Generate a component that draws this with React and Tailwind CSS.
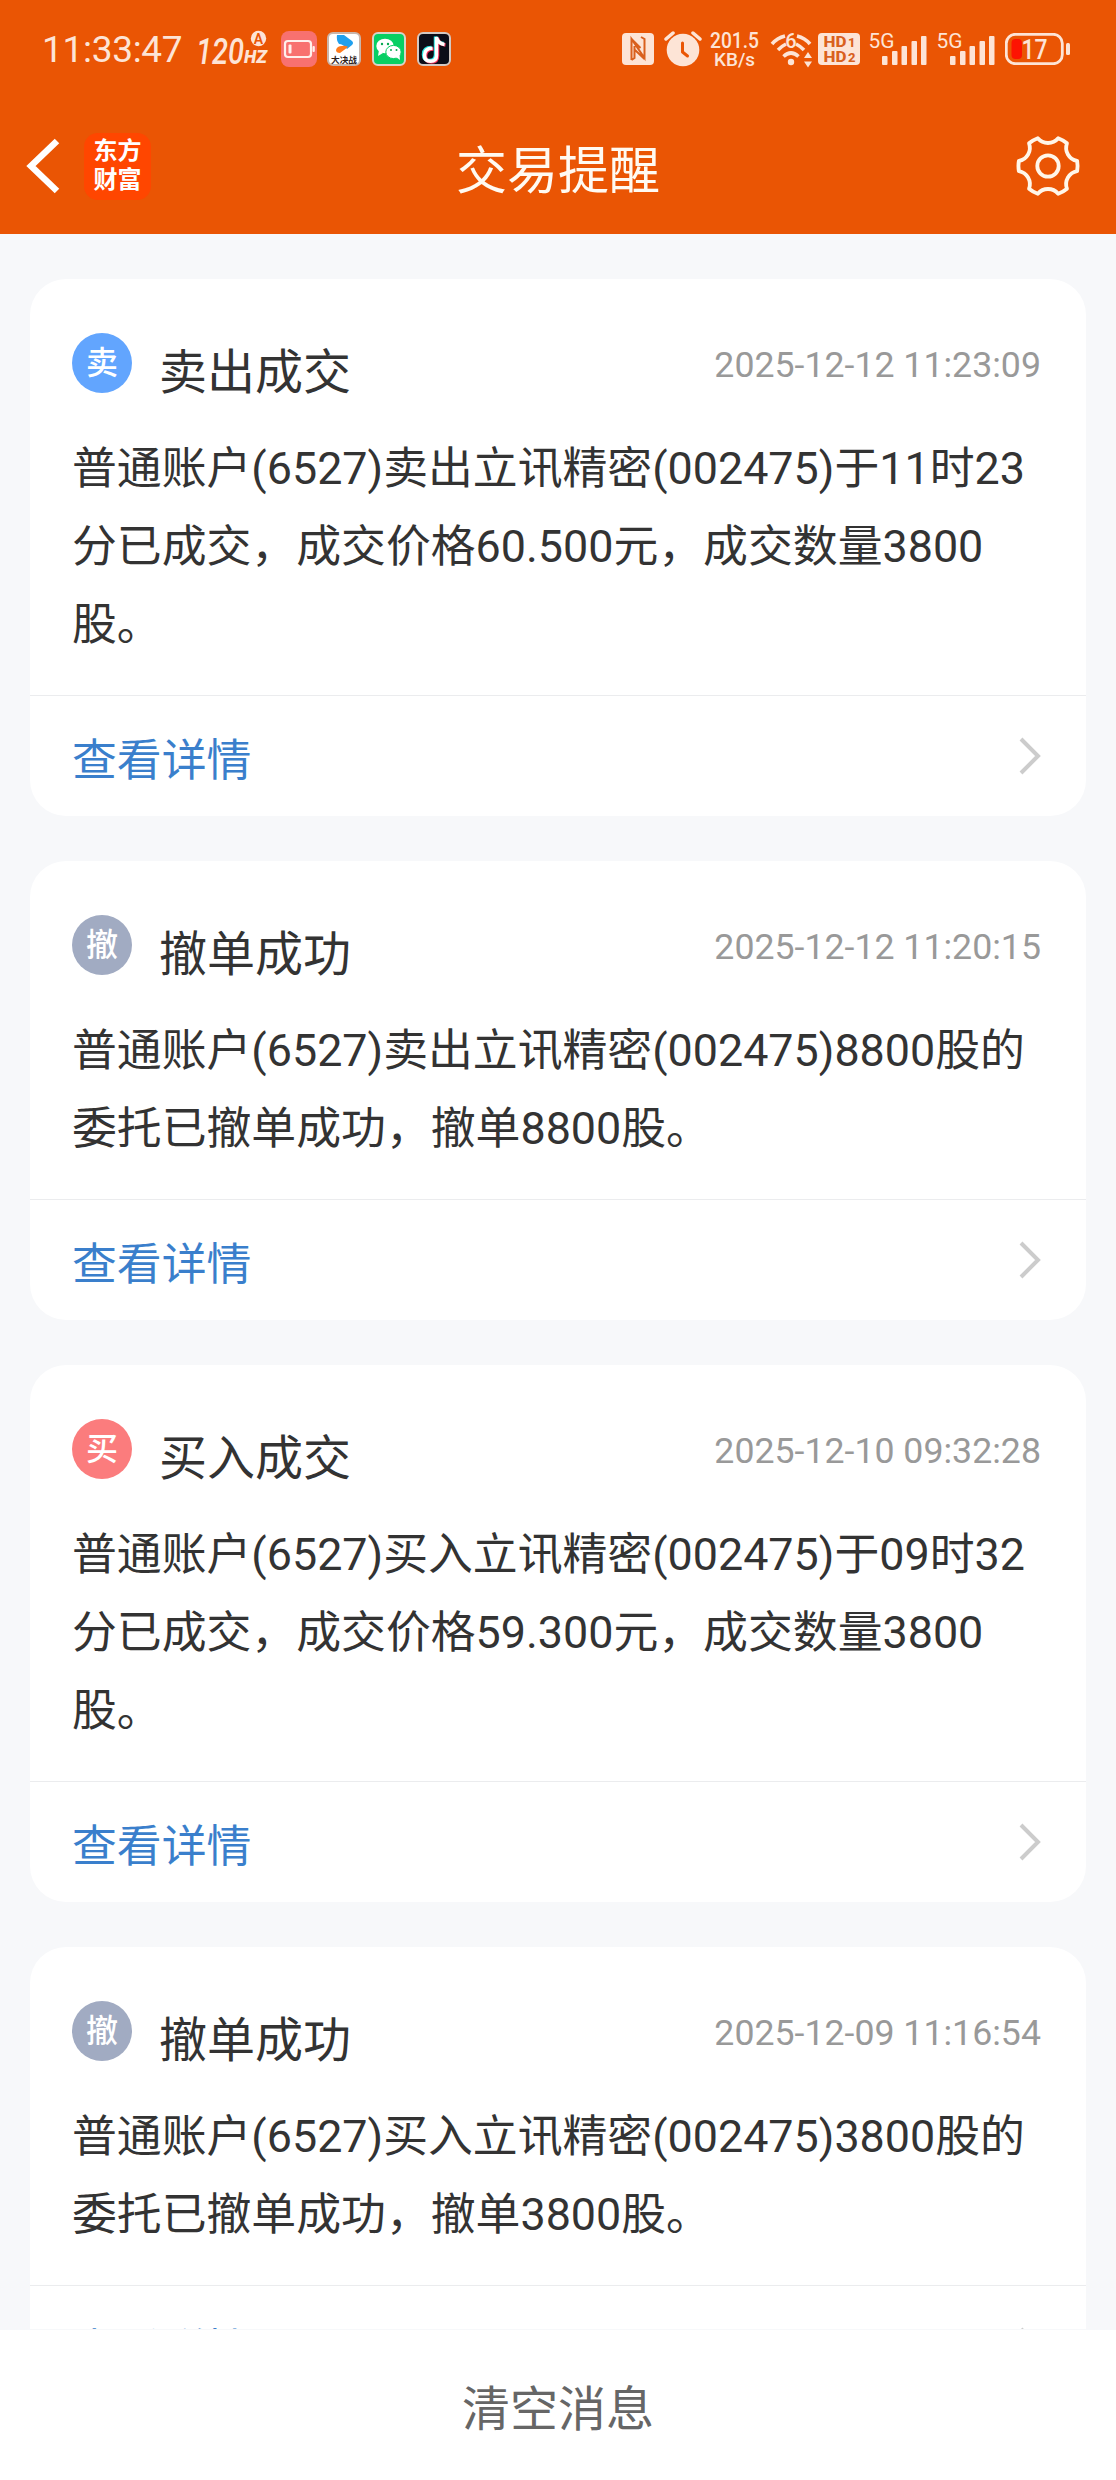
import React from 'react';
import clsx from 'clsx';

// --- DATA ---
const messages = [
  {
    type: 'sell',
    title: '卖出成交',
    time: '2025-12-12 11:23:09',
    text: '普通账户(6527)卖出立讯精密(002475)于11时23分已成交，成交价格60.500元，成交数量3800股。',
  },
  {
    type: 'cancel',
    title: '撤单成功',
    time: '2025-12-12 11:20:15',
    text: '普通账户(6527)卖出立讯精密(002475)8800股的委托已撤单成功，撤单8800股。',
  },
  {
    type: 'buy',
    title: '买入成交',
    time: '2025-12-10 09:32:28',
    text: '普通账户(6527)买入立讯精密(002475)于09时32分已成交，成交价格59.300元，成交数量3800股。',
  },
  {
    type: 'cancel',
    title: '撤单成功',
    time: '2025-12-09 11:16:54',
    text: '普通账户(6527)买入立讯精密(002475)3800股的委托已撤单成功，撤单3800股。',
  },
];

const badges = {
  sell: { label: '卖', color: 'bg-[#62a5fe]' },
  cancel: { label: '撤', color: 'bg-[#a1abc2]' },
  buy: { label: '买', color: 'bg-[#fb7c7d]' },
};

// --- STATUS BAR ICONS ---

const RefreshRate = () => (
  <svg className="ml-[15px] h-[36px] w-[74px] overflow-visible" viewBox="0 0 74 36" fill="#fde4d6">
    <text x="0" y="33" fontSize="37" fontWeight="500" fontStyle="italic" textLength="48" lengthAdjust="spacingAndGlyphs">120</text>
    <text x="48" y="32" fontSize="19" fontWeight="900" fontStyle="italic" textLength="23" lengthAdjust="spacingAndGlyphs">HZ</text>
    <circle cx="62.500" cy="7.500" r="7.700" />
    <text x="62.500" y="12.500" fontSize="14" fontWeight="600" textAnchor="middle" className="fill-[#ea5504]">A</text>
  </svg>
);

const LowBatteryApp = () => (
  <svg className="ml-[11px] size-[36px]" viewBox="0 0 36 36">
    <rect width="36" height="36" rx="8" fill="#f8716f" />
    <rect x="4" y="10" width="26" height="16" rx="3" fill="none" stroke="#fff0ec" strokeWidth="2.2" />
    <rect x="7.5" y="13.5" width="3" height="9" rx="1" fill="#fff0ec" />
    <rect x="31.5" y="15" width="2.3" height="6" rx="1" fill="#fff0ec" />
  </svg>
);

const VideoApp = () => (
  <svg className="ml-[10px] size-[34px]" viewBox="0 0 34 34">
    <rect x="1" y="1" width="32" height="32" rx="5" fill="#fff" stroke="#c9b5ab" strokeWidth="2" />
    <path d="M10 3h7l8 6q2 2 0 4l-5 4q-4-5-8-5-3-4-2-9z" fill="#20a0ee" />
    <path d="M21 15l-8 6q-4 0-4-3 1-4 6-4 3-1 6 1z" fill="#ff7a1c" />
    <text x="4" y="30.500" fontSize="8" fontWeight="700" fill="#2d211c" textLength="26" lengthAdjust="spacingAndGlyphs">大决战</text>
  </svg>
);

const WeChatApp = () => (
  <svg className="ml-[11px] size-[34px]" viewBox="0 0 34 34">
    <rect x="1" y="1" width="32" height="32" rx="5" fill="#07cf63" stroke="#d9d3c8" strokeWidth="2" />
    <ellipse cx="13" cy="14" rx="8.7" ry="7.3" fill="#fff" />
    <path d="M7 18l-1 6 5-3z" fill="#fff" />
    <ellipse cx="21.5" cy="20" rx="7.7" ry="6.6" fill="#fff" stroke="#07cf63" strokeWidth="1" />
    <path d="M24 25l4 3-.5-5z" fill="#fff" />
    <g fill="#07a850">
      <circle cx="10" cy="12" r="1.2" />
      <circle cx="16" cy="12" r="1.2" />
      <circle cx="19" cy="18" r="1" />
      <circle cx="24.5" cy="18" r="1" />
    </g>
  </svg>
);

const TikTokApp = () => (
  <svg className="ml-[11px] size-[34px]" viewBox="0 0 34 34">
    <rect x="1" y="1" width="32" height="32" rx="5" fill="#0c0d18" stroke="#d3c8c2" strokeWidth="2" />
    <g fill="none" strokeWidth="3.500">
      <path d="M14.500 15.500q-8 0-8 7 0 6 6 6t6-6V4.500q1 6 8 7" stroke="#25e5e0" />
      <path d="M16.500 17q-8 0-8 7 0 6 6 6t6-6V6q1 6 8 7" stroke="#f5345c" />
      <path d="M15.500 16.200q-8 0-8 7 0 6 6 6t6-6V5q1 6.500 8 7.500" stroke="#fff" />
    </g>
  </svg>
);

const Nfc = () => (
  <svg className="size-[32px]" viewBox="0 0 32 32">
    <rect width="32" height="32" rx="4" fill="#fde4d6" />
    <path d="M9.500 27V6l13 19V10M9.500 27l3-2V13M22.500 25V6l-3.500-2M9.500 6l9 9M13 17l9.500 9" fill="none" stroke="#d9601e" strokeWidth="2" />
  </svg>
);

const Alarm = () => (
  <svg className="ml-[10px] h-[36px] w-[38px]" viewBox="0 0 38 36">
    <circle cx="19" cy="19" r="16.300" fill="#fde4d6" />
    <path d="M2 8l7-6M36 8l-7-6" stroke="#fde4d6" strokeWidth="3.500" strokeLinecap="round" />
    <path d="M18.500 12v9l5 4" fill="none" stroke="#ea5504" strokeWidth="3" strokeLinecap="round" strokeLinejoin="round" />
  </svg>
);

const NetSpeed = () => (
  <svg className="ml-[7px] h-[36px] w-[52px] overflow-visible" viewBox="0 0 52 36" fill="#fde4d6">
    <text x="1" y="17" fontSize="22" fontWeight="500" textLength="49" lengthAdjust="spacingAndGlyphs">201.5</text>
    <text x="5" y="35" fontSize="19" fontWeight="500" textLength="41" lengthAdjust="spacingAndGlyphs">KB/s</text>
  </svg>
);

const Wifi = () => (
  <svg className="ml-[10px] h-[36px] w-[42px] overflow-visible" viewBox="0 0 42 36">
    <g fill="none" stroke="#fde4d6" strokeWidth="3.600">
      <path d="M1 13Q6 7 14 5M26 5q8 2 13 8" />
      <path d="M7 19q4-4 8-6M25 13q4 2 8 6" />
      <path d="M12.500 25.500q7.500-7 15 0" />
    </g>
    <circle cx="20" cy="31" r="3.200" fill="#fde4d6" />
    <text x="20" y="17" fontSize="20" fontWeight="500" fill="#fde4d6" textAnchor="middle">6</text>
    <path d="M33 27h8l-4-6zM33 30.500h8l-4 6z" fill="#fde4d6" />
  </svg>
);

const HdBadge = () => (
  <svg className="ml-[5px] h-[32px] w-[42px]" viewBox="0 0 42 32">
    <rect width="42" height="32" rx="4" fill="#fde4d6" />
    <g fill="#d9601e" fontWeight="800">
      <text x="5.500" y="14" fontSize="15" textLength="23" lengthAdjust="spacingAndGlyphs">HD</text>
      <text x="30" y="14" fontSize="13">1</text>
      <text x="5.500" y="28.500" fontSize="15" textLength="23" lengthAdjust="spacingAndGlyphs">HD</text>
      <text x="30" y="28.500" fontSize="13">2</text>
    </g>
  </svg>
);

const Signal = () => (
  <svg className="ml-[8px] h-[36px] w-[60px] overflow-visible" viewBox="0 0 60 36" fill="#fde4d6">
    <text x="0.500" y="16.500" fontSize="21" textLength="26" lengthAdjust="spacingAndGlyphs">5G</text>
    <rect x="14" y="25" width="5.500" height="9" rx="1" />
    <rect x="24" y="20" width="5.500" height="14" rx="1" />
    <rect x="33.500" y="15" width="5.500" height="19" rx="1" />
    <rect x="43.500" y="10" width="5.500" height="24" rx="1" />
    <rect x="53" y="5" width="5.500" height="29" rx="1" />
  </svg>
);

const Battery = () => (
  <svg className="ml-[9px] h-[32px] w-[66px]" viewBox="0 0 66 32">
    <rect x="1.300" y="1.300" width="56" height="29.400" rx="9" fill="none" stroke="#fde4d6" strokeWidth="2.800" />
    <rect x="61" y="10" width="4" height="12" rx="1.500" fill="#fde4d6" />
    <rect x="6.500" y="6" width="10.500" height="20" rx="4" fill="#fd1302" />
    <text x="16.500" y="26" fontSize="27" fontWeight="500" fill="#fde4d6" textLength="26" lengthAdjust="spacingAndGlyphs">17</text>
  </svg>
);

const StatusBar = () => (
  <div className="flex h-[98px] items-center pl-[42px] pr-[45px]">
    <span className="w-[139px] text-[37px] leading-none tracking-[-0.3px] text-[#fde4d6]">11:33:47</span>
    <RefreshRate />
    <LowBatteryApp />
    <VideoApp />
    <WeChatApp />
    <TikTokApp />
    <div className="ml-auto flex items-center">
      <Nfc />
      <Alarm />
      <NetSpeed />
      <Wifi />
      <HdBadge />
      <Signal />
      <Signal />
      <Battery />
    </div>
  </div>
);

// --- NAV BAR ---

const GearIcon = () => (
  <svg className="size-[64px]" viewBox="-33.500 -33.500 67 67" fill="none" stroke="#fff6e9" strokeWidth="4" strokeLinejoin="round">
    <path d="M10.660-29.060A31 31 0 0 1 19.840-23.760A13.900 13.900 0 0 0 30.500-5.300A31 31 0 0 1 30.500 5.300A13.900 13.900 0 0 0 19.840 23.760A31 31 0 0 1 10.660 29.060A13.900 13.900 0 0 0-10.660 29.060A31 31 0 0 1-19.840 23.760A13.900 13.900 0 0 0-30.500 5.300A31 31 0 0 1-30.500-5.300A13.900 13.900 0 0 0-19.840-23.760A31 31 0 0 1-10.660-29.060A13.900 13.900 0 0 0 10.660-29.060Z" />
    <circle r="11.200" />
  </svg>
);

const NavBar = () => (
  <div className="flex h-[136px] items-center justify-between pl-[25px] pr-[36px]">
    <div className="flex w-[200px] items-center">
      <svg className="h-[58px] w-[36px]" viewBox="0 0 36 58" fill="none" stroke="#fff" strokeWidth="6.500">
        <path d="M32 4L6 29l26 25" />
      </svg>
      <div className="ml-[23px] flex size-[67px] flex-col items-center justify-center rounded-[14px] bg-[#ff4600] text-[24px] font-bold leading-[29px] text-white">
        <span>东方</span>
        <span>财富</span>
      </div>
    </div>
    <h1 className="pl-[11px] pt-[12px] text-[51px] leading-[60px] text-[#fffaf2]">交易提醒</h1>
    <button className="flex w-[200px] justify-end">
      <GearIcon />
    </button>
  </div>
);

// --- MESSAGE CARD ---

const MessageCard = ({ message }) => {
  const badge = badges[message.type];

  return (
    <div className="shrink-0 rounded-[36px] bg-white">
      <div className="flex h-[151px] items-start pl-[42px] pr-[45px] pt-[54px]">
        <span className={clsx('flex size-[60px] items-center justify-center rounded-full text-[32px] font-medium leading-none text-white', badge.color)}>
          {badge.label}
        </span>
        <h2 className="ml-[27px] pt-[10px] text-[48px] leading-[60px] text-[#333]">{message.title}</h2>
        <span className="ml-auto pt-[2px] text-[35.7px] leading-[60px] text-[#999]">{message.time}</span>
      </div>
      <p className="px-[42px] pb-[31px] text-[44.85px] leading-[78px] text-[#333]">{message.text}</p>
      <div className="flex h-[121px] items-center justify-between border-t border-[#ebecee] pl-[42px] pr-[44px]">
        <span className="pt-[10px] text-[44.85px] leading-[60px] text-[#3a7fcc]">查看详情</span>
        <svg className="h-[38px] w-[24px]" viewBox="0 0 24 38" fill="none" stroke="#ccc" strokeWidth="4">
          <path d="M3 2l17 17L3 36" />
        </svg>
      </div>
    </div>
  );
};

export default function App() {
  return (
    <div className="flex h-[2480px] w-[1116px] flex-col overflow-hidden bg-[#f7f8fa] font-['Roboto','Noto_Sans_CJK_SC',sans-serif]">
      <header className="shrink-0 bg-[#ea5504]">
        <StatusBar />
        <NavBar />
      </header>

      <main className="flex min-h-0 flex-1 flex-col gap-[45px] overflow-hidden px-[30px] pt-[45px]">
        {messages.map((message) => (
          <MessageCard key={message.time} message={message} />
        ))}
      </main>

      <footer className="flex h-[151px] shrink-0 items-center justify-center border-t border-[#f7f8fa] bg-white">
        <button className="pt-[10px] text-[48px] leading-[60px] text-[#666]">清空消息</button>
      </footer>
    </div>
  );
}
